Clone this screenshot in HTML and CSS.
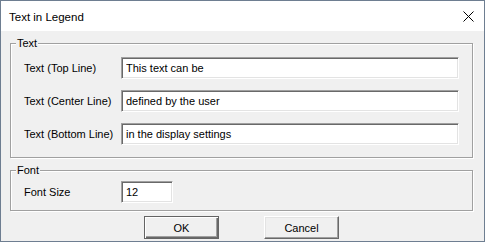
FILE: index.html
```html
<!DOCTYPE html>
<html>
<head>
<meta charset="utf-8">
<link rel="stylesheet" href="styles.css">
</head>
<body>
<div class="window">
  <div class="titlebar">
    <span class="title">Text in Legend</span>
    <svg class="close" width="11" height="11" viewBox="0 0 11 11">
      <path d="M0.5 0.5 L10.5 10.5 M10.5 0.5 L0.5 10.5" stroke="#000" stroke-width="1" fill="none"/>
    </svg>
  </div>
  <div class="content">
    <div class="group group-text">
      <span class="legend">Text</span>
      <div class="row">
        <span class="label">Text (Top Line)</span>
        <input class="field wide" type="text" value="This text can be" readonly>
      </div>
      <div class="row">
        <span class="label">Text (Center Line)</span>
        <input class="field wide" type="text" value="defined by the user" readonly>
      </div>
      <div class="row">
        <span class="label">Text (Bottom Line)</span>
        <input class="field wide" type="text" value="in the display settings" readonly>
      </div>
    </div>
    <div class="group group-font">
      <span class="legend">Font</span>
      <div class="row">
        <span class="label">Font Size</span>
        <input class="field narrow" type="text" value="12" readonly>
      </div>
    </div>
    <div class="buttons">
      <button class="btn default">OK</button>
      <button class="btn">Cancel</button>
    </div>
  </div>
</div>
</body>
</html>
```
FILE: styles.css
```css
html, body {
  margin: 0;
  padding: 0;
  background: #f0f0f0;
}

.window {
  width: 485px;
  height: 242px;
  box-sizing: border-box;
  border: 1px solid #6e7e91;
  display: flex;
  flex-direction: column;
  background: #f0f0f0;
  font-family: "Liberation Sans", Arial, sans-serif;
  font-size: 11px;
  color: #000;
}

.titlebar {
  height: 30px;
  flex: none;
  background: #fff;
  display: flex;
  align-items: center;
  justify-content: space-between;
  padding: 0 10px 0 8px;
}

.title {
  font-size: 11.5px;
  line-height: 14px;
  margin-top: 1px;
}

.close {
  display: block;
  margin-top: 1px;
}

.content {
  flex: 1;
  padding: 12px 11px 0 9px;
}

.group {
  position: relative;
  border: 1px solid #a0a0a0;
  box-shadow: inset 1px 1px 0 #fff, 1px 1px 0 #fff;
}

.group-text {
  padding: 13px 13px 12px 13px;
}

.group-font {
  margin-top: 12px;
  padding: 10px 13px 7px 13px;
}

.legend {
  position: absolute;
  top: -8px;
  left: 5px;
  padding: 0 1px;
  line-height: 14px;
  background: #f0f0f0;
}

.row {
  display: flex;
  align-items: center;
  height: 22px;
}

.row + .row {
  margin-top: 11px;
}

.label {
  width: 97px;
  flex: none;
  line-height: 14px;
}

.field {
  height: 22px;
  box-sizing: border-box;
  margin: 0;
  padding: 0 4px;
  background: #fff;
  border-style: solid;
  border-width: 1px;
  border-color: #a0a0a0 #fff #fff #a0a0a0;
  box-shadow: inset 1px 1px 0 #696969, inset -1px -1px 0 #e3e3e3;
  font-family: "Liberation Sans", Arial, sans-serif;
  font-size: 11px;
  color: #000;
  outline: none;
}

.wide {
  width: 338px;
}

.narrow {
  width: 52px;
}

.buttons {
  display: flex;
  justify-content: center;
  gap: 45px;
  margin-top: 5px;
}

.btn {
  width: 75px;
  height: 23px;
  box-sizing: border-box;
  margin: 0;
  padding: 0;
  background: #f0f0f0;
  border-style: solid;
  border-width: 1px;
  border-color: #fff #696969 #696969 #fff;
  box-shadow: inset -1px -1px 0 #a0a0a0, inset 1px 1px 0 #e3e3e3;
  font-family: "Liberation Sans", Arial, sans-serif;
  font-size: 11px;
  color: #000;
}

.btn.default {
  border-color: #646464;
  box-shadow: inset 1px 1px 0 #fff, inset -1px -1px 0 #696969, inset -2px -2px 0 #a0a0a0;
}
```
